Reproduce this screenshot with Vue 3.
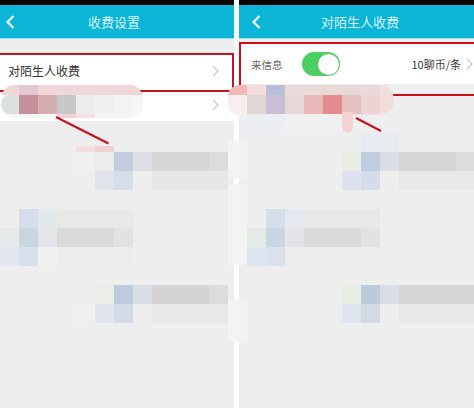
<script setup>
const g = (y, h, cells) => cells.map(([x, w, c]) => ({ x, y, w, h, c }))

const cells = [
  // privacy mosaic, upper left
  ...g(85, 10, [[19,19,'#e2c8d4'],[38,95,'#f1d6d8']]),
  ...g(95, 19, [[19,19,'#c58f9b'],[38,19,'#d4aeb3'],[57,19,'#c8c8c8'],[76,19,'#ececec'],[95,19,'#f0f0f0'],[114,19,'#f3f3f3']]),
  ...g(114, 4, [[57,19,'#f0d0d2'],[76,19,'#f5dfe0'],[95,38,'#f5f5f5']]),
  // privacy mosaic, upper right
  ...g(85, 10, [[266,19,'#b8c0d8'],[285,95,'#e9d9d9']]),
  ...g(95, 19, [[247,19,'#e0d8d4'],[266,19,'#c8c0d2'],[285,19,'#e5d8d8'],[304,19,'#e8b8b8'],[323,19,'#e38c8c'],[342,19,'#e6c0c0'],[361,19,'#ecd4d4']]),
  ...g(114, 19, [[247,38,'#eceef2'],[285,57,'#f0f0f0']]),
  // left list
  ...g(146, 6, [[76,19,'#f3dede'],[95,19,'#f0d0d0']]),
  ...g(152, 19, [[76,19,'#f0f0f2'],[95,19,'#eaedea'],[114,19,'#c2cede'],[133,19,'#dcdee4'],[152,57,'#d5d5d5'],[209,19,'#dcdcdc']]),
  ...g(171, 19, [[95,19,'#e0e3ec'],[114,19,'#d5dde8'],[133,19,'#eeeeee'],[152,76,'#e7e7e7']]),
  ...g(209, 19, [[19,19,'#d5deea'],[38,19,'#e3e8ec'],[57,76,'#e8e8e8']]),
  ...g(228, 19, [[0,19,'#e6eaea'],[19,19,'#c9d6e0'],[38,19,'#e3e5e8'],[57,57,'#d9d9d9'],[114,19,'#e2e2e2']]),
  ...g(247, 19, [[0,19,'#e3e8f0'],[19,19,'#d8e0ec'],[38,19,'#f0f0f0'],[57,76,'#ececec']]),
  ...g(285, 19, [[95,19,'#ebeee8'],[114,19,'#bdcbdc'],[133,19,'#d8dde4'],[152,57,'#d4d4d4'],[209,19,'#dcdcdc']]),
  ...g(304, 19, [[76,19,'#f0f0f3'],[95,19,'#e0e4ec'],[114,19,'#d3dae6'],[133,19,'#eeeeee'],[152,76,'#e8e8e8']]),
  // right list
  ...g(133, 19, [[361,38,'#e8ebef']]),
  ...g(152, 19, [[342,19,'#e8eee6'],[361,19,'#bfcde0'],[380,19,'#dadde4'],[399,57,'#d5d5d5'],[456,18,'#dcdcdc']]),
  ...g(171, 19, [[342,19,'#dde2ee'],[361,19,'#d5dbe8'],[380,19,'#eeeeee'],[399,75,'#e8e8e8']]),
  ...g(209, 19, [[266,19,'#d5deea'],[285,19,'#e5e8ee'],[304,76,'#e8e8e8']]),
  ...g(228, 19, [[247,19,'#e4ebe4'],[266,19,'#c9d6e2'],[285,19,'#e2e4e8'],[304,57,'#dadada'],[361,19,'#e2e2e2']]),
  ...g(247, 19, [[247,19,'#dfe5ef'],[266,19,'#dae1ec'],[285,95,'#ececec']]),
  ...g(285, 19, [[342,19,'#e6eee4'],[361,19,'#bccadc'],[380,19,'#d8dde6'],[399,75,'#d5d5d5']]),
  ...g(304, 19, [[342,19,'#dfe4ee'],[361,19,'#d3dae6'],[380,19,'#eeeeee'],[399,75,'#e8e8e8']]),
  // smudges over the divider
  ...g(141, 37, [[228,19,'#f3f3f3']]),
  ...g(184, 81, [[228,19,'#f3f3f3']]),
  ...g(300, 42, [[228,19,'#f3f3f3']]),
]

const cellStyle = (m) => ({
  left: m.x + 'px', top: m.y + 'px', width: m.w + 'px', height: m.h + 'px', background: m.c,
})
</script>

<template>
  <div class="screen">
    <section class="phone">
      <div class="status"></div>
      <header class="bar bar-left">
        <svg class="back" width="10" height="14" viewBox="0 0 10 14"><path d="M8.500 1 2.500 7 8.500 13" /></svg>
        <span class="bar-title">收费设置</span>
      </header>
      <div class="list-left">
        <div class="row row-framed">
          <span class="row-label">对陌生人收费</span>
          <svg class="chev" width="7" height="12" viewBox="0 0 7 12"><path d="M1 1l5 5-5 5" /></svg>
        </div>
        <div class="row row-second">
          <svg class="chev" width="7" height="12" viewBox="0 0 7 12"><path d="M1 1l5 5-5 5" /></svg>
        </div>
      </div>
    </section>

    <section class="phone">
      <div class="status"></div>
      <header class="bar bar-right">
        <svg class="back" width="10" height="14" viewBox="0 0 10 14"><path d="M8.500 1 2.500 7 8.500 13" /></svg>
        <span class="bar-title">对陌生人收费</span>
      </header>
      <div class="list-right">
        <div class="frame-right">
          <div class="row row-fee">
            <span class="fee-label">来信息</span>
            <span class="toggle"><span class="knob"></span></span>
            <span class="fee-value">10聊币/条</span>
            <svg class="chev" width="7" height="12" viewBox="0 0 7 12"><path d="M1 1l5 5-5 5" /></svg>
          </div>
        </div>
      </div>
    </section>

    <div class="overlay">
      <div class="blob blob-left"></div>
      <div class="blob blob-right"></div>
      <div class="blob blob-corner"></div>
      <div class="blob blob-under"></div>
      <div v-for="(m, i) in cells" :key="i" class="cell" :style="cellStyle(m)"></div>
      <svg class="lines" width="474" height="408" viewBox="0 0 474 408">
        <path d="M56 117 108.500 143.500" />
        <path d="M356 118 381 131" />
      </svg>
    </div>
  </div>
</template>

<style scoped>
.screen {
  position: relative;
  width: 474px;
  height: 408px;
  overflow: hidden;
  display: grid;
  grid-template-columns: 234px 235px;
  column-gap: 5px;
  background: #ffffff;
  font-family: "Noto Sans CJK SC", "Noto Sans", sans-serif;
}
.phone {
  display: flex;
  flex-direction: column;
  background: #eeeeee;
  min-width: 0;
}
.status {
  height: 5px;
  background: #050505;
}
.bar {
  position: relative;
  height: 33px;
  display: flex;
  align-items: center;
  justify-content: center;
  background: #0cb5d6;
  border-bottom: 1px solid #9fdfee;
  box-sizing: content-box;
}
.bar-left {
  padding-right: 6px;
}
.bar-right {
  padding-left: 7px;
}
.bar-title {
  color: #d8f3f8;
  font-size: 13px;
}
.back {
  position: absolute;
  left: 5px;
  top: 10px;
  fill: none;
  stroke: #eefafc;
  stroke-width: 2.2;
}
.bar-right .back {
  left: 12px;
}
.list-left {
  padding-top: 14px;
  display: flex;
  flex-direction: column;
}
.row {
  display: flex;
  align-items: center;
  background: #ffffff;
  box-sizing: border-box;
}
.row-framed {
  height: 39px;
  padding: 0 13px 4px 8px;
  justify-content: space-between;
  border-top: 2px solid #c01420;
  border-right: 2px solid #c01420;
  border-bottom: 2px solid #c01420;
}
.row-label {
  font-size: 12px;
  color: #333333;
}
.row-second {
  height: 29px;
  padding: 0 15px 3px 8px;
  justify-content: flex-end;
}
.chev {
  flex: none;
  fill: none;
  stroke: #c8c8c8;
  stroke-width: 1.2;
}
.list-right {
  padding-top: 3px;
}
.frame-right {
  height: 54px;
  box-sizing: border-box;
  border: 2px solid #c81018;
  border-right: 0;
  background: #eeeeee;
}
.row-fee {
  height: 40px;
  padding: 0 1px 0 10px;
}
.fee-label {
  font-size: 10.500px;
  color: #666666;
  width: 51px;
}
.toggle {
  width: 38px;
  height: 24px;
  border-radius: 12px;
  background: #4ccf62;
  display: flex;
  justify-content: flex-end;
  align-items: center;
  padding-right: 1px;
  box-sizing: border-box;
}
.knob {
  width: 21px;
  height: 21px;
  border-radius: 50%;
  background: #ffffff;
  box-shadow: 0 0 1px #6a8a6a;
}
.fee-value {
  margin-left: auto;
  margin-right: 5px;
  font-size: 11px;
  color: #3a3a3a;
}
.overlay {
  position: absolute;
  inset: 0;
  pointer-events: none;
}
.cell {
  position: absolute;
}
.blob {
  position: absolute;
}
.blob-left {
  left: 1px;
  top: 85px;
  width: 142px;
  height: 33px;
  border-radius: 14px;
  background: linear-gradient(#f1d6d8 0 10px, #f6f6f6 10px);
}
.blob-left::before {
  content: "";
  position: absolute;
  left: 0;
  top: 10px;
  width: 19px;
  height: 19px;
  border-radius: 10px 0 0 10px;
  background: #dcdfdf;
}
.blob-right {
  left: 228px;
  top: 85px;
  width: 166px;
  height: 30px;
  border-radius: 12px 15px 15px 12px;
  background: #f3dcdc;
}
.blob-corner {
  left: 228px;
  top: 85px;
  width: 19px;
  height: 30px;
  border-radius: 12px 0 0 12px;
  background: linear-gradient(#f2b8b8 0 10px, #f8eeee 10px);
}
.blob-under {
  left: 342px;
  top: 112px;
  width: 11px;
  height: 20px;
  border-radius: 0 0 6px 6px;
  background: #f2d2d2;
  z-index: 1;
}
.lines {
  position: absolute;
  left: 0;
  top: 0;
  fill: none;
  stroke: #c4101c;
  stroke-width: 2;
}
</style>
